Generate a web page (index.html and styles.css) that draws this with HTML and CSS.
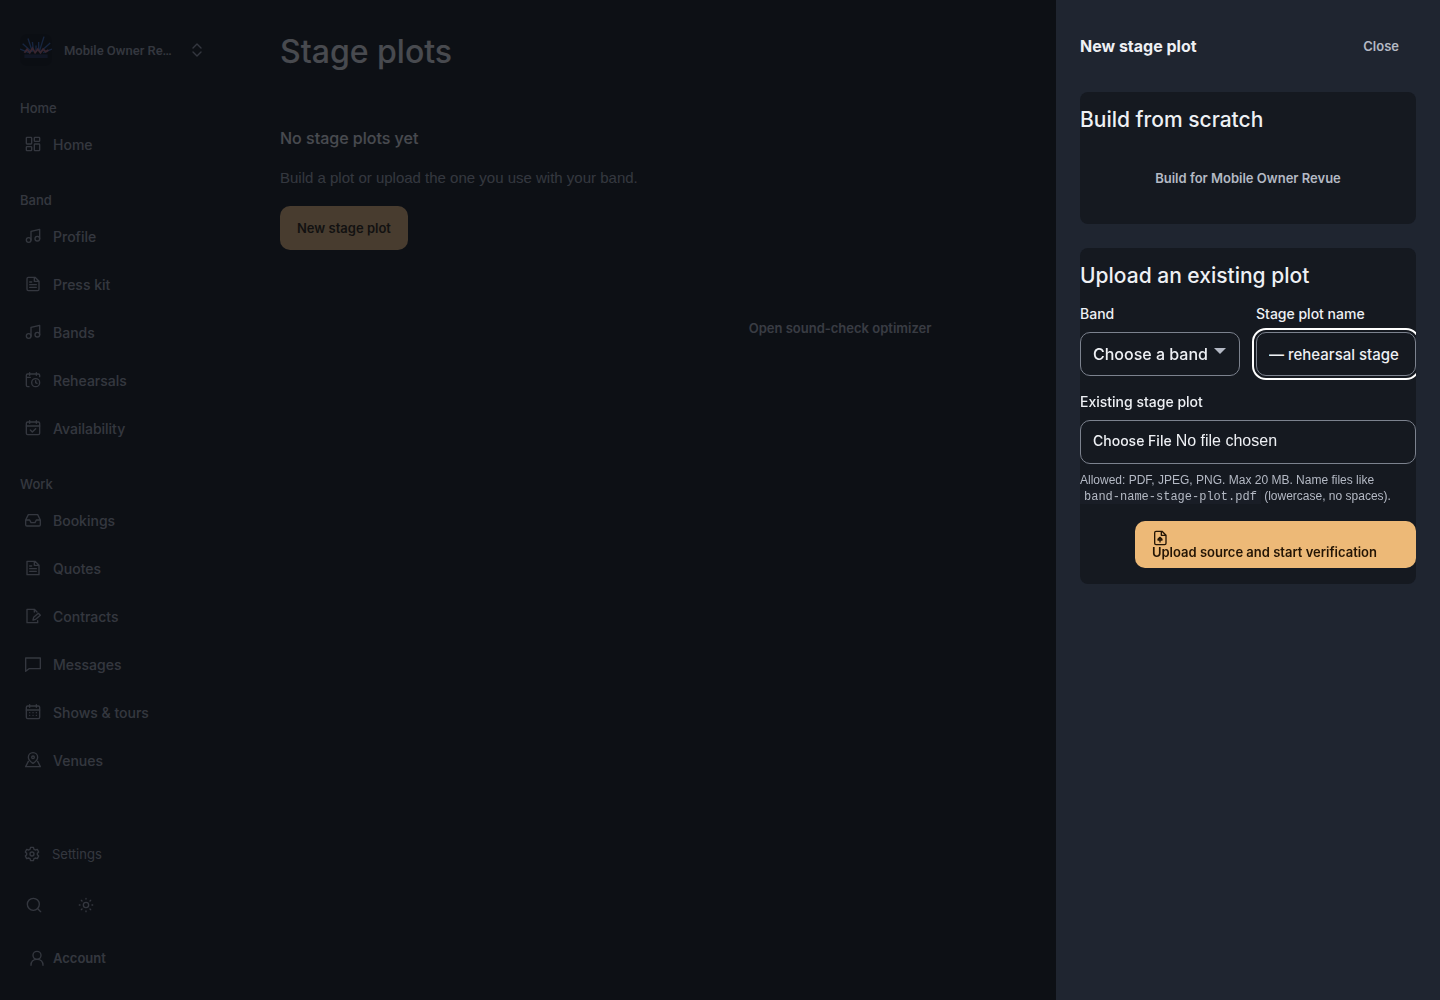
FILE: index.html
```html
<!DOCTYPE html>
<html lang="en">
<head>
    <meta charset="UTF-8">
    <meta name="viewport" content="width=device-width, initial-scale=1.0">
    <title>Stage plots</title>
    <link rel="stylesheet" href="styles.css">
</head>
<body>
    <div class="app">
        <aside class="sidebar">
            <button type="button" class="band-switch">
                <svg class="avatar" viewBox="0 0 36 36" fill="none" aria-hidden="true">
                    <rect width="36" height="36" rx="8" fill="#07090f"/>
                    <g stroke="#2f62b8" stroke-width="1.5">
                        <path d="M13 20 3 11M14 20 9 5M15 19 14 9M21 19 21 9M22 19 27 3M23 20 34 10M10 21 0 17M26 21 36 17M18 20V13"/>
                    </g>
                    <path d="M5 21l3-4 3 4 3-5 3 5 3-4 3 4 3-4 3 3 3-2" stroke="#b0647c" stroke-width="2"/>
                    <path d="M5 25h26" stroke="#1c2a50" stroke-width="4"/>
                </svg>
                <span class="band-name">Mobile Owner Revue</span>
                <svg class="icon" viewBox="0 0 24 24"><path d="m6 9 6-6 6 6M6 15l6 6 6-6"/></svg>
            </button>

            <nav class="nav">
                <section class="nav-group">
                    <h2>Home</h2>
                    <a href="#"><svg class="icon" viewBox="0 0 24 24"><rect x="2" y="2" width="8" height="10" rx="1"/><rect x="14" y="2" width="8" height="6" rx="1"/><rect x="14" y="12" width="8" height="10" rx="1"/><rect x="2" y="16" width="8" height="6" rx="1"/></svg>Home</a>
                </section>
                <section class="nav-group">
                    <h2>Band</h2>
                    <a href="#"><svg class="icon" viewBox="0 0 24 24"><path d="M9 18V5l13-3v14"/><circle cx="5.500" cy="18" r="3.500"/><circle cx="18.500" cy="16" r="3.500"/></svg>Profile</a>
                    <a href="#"><svg class="icon" viewBox="0 0 24 24"><path d="M15 2H5a2 2 0 0 0-2 2v16a2 2 0 0 0 2 2h14a2 2 0 0 0 2-2V8zM14 2v6h7M7 9h3M7 13h10M7 17h10"/></svg>Press kit</a>
                    <a href="#"><svg class="icon" viewBox="0 0 24 24"><path d="M9 18V5l13-3v14"/><circle cx="5.500" cy="18" r="3.500"/><circle cx="18.500" cy="16" r="3.500"/></svg>Bands</a>
                    <a href="#"><svg class="icon" viewBox="0 0 24 24"><path d="M7 1v4M17 1v4M22 7V5a2 2 0 0 0-2-2H4a2 2 0 0 0-2 2v15a2 2 0 0 0 2 2h2M2 8h6M16 13v3l2 1"/><circle cx="16" cy="16" r="6"/></svg>Rehearsals</a>
                    <a href="#"><svg class="icon" viewBox="0 0 24 24"><rect x="2" y="3" width="20" height="19" rx="2"/><path d="M7 1v4M17 1v4M2 9h20M8 15l3 3 5-5"/></svg>Availability</a>
                </section>
                <section class="nav-group">
                    <h2>Work</h2>
                    <a href="#"><svg class="icon" viewBox="0 0 24 24"><path d="M1 12h6l2 4h6l2-4h6M5 4 1 12v7a2 2 0 0 0 2 2h18a2 2 0 0 0 2-2v-7l-4-8z"/></svg>Bookings</a>
                    <a href="#"><svg class="icon" viewBox="0 0 24 24"><path d="M15 2H3v20h18V8zM14 2v6h7M7 9h3M7 13h10M7 17h10"/></svg>Quotes</a>
                    <a href="#"><svg class="icon" viewBox="0 0 24 24"><path d="M18 6l-4-4H3v20h16v-3M14 2v4M12 18l1-4 7-6 3 3-7 6z"/></svg>Contracts</a>
                    <a href="#"><svg class="icon" viewBox="0 0 24 24"><path d="M1 3h22v16H6l-5 4z"/></svg>Messages</a>
                    <a href="#"><svg class="icon" viewBox="0 0 24 24"><rect x="2" y="3" width="20" height="19" rx="2"/><path d="M7 1v4M17 1v4M2 9h20M7 13h.1M12 13h.1M17 13h.1M7 17h.1M12 17h.1M17 17h.1"/></svg>Shows &amp; tours</a>
                    <a href="#"><svg class="icon" viewBox="0 0 24 24"><path d="M12 17s-7-4-7-9a7 7 0 0 1 14 0c0 5-7 9-7 9z"/><circle cx="12" cy="8" r="2"/><path d="M5 14l-4 8h22l-4-8"/></svg>Venues</a>
                </section>
            </nav>

            <div class="sidebar-foot">
                <a href="#" class="settings"><svg class="icon" viewBox="0 0 24 24"><path d="M10 2h4l1 3 2 1 3-1 2 4-2 2v2l2 2-2 4-3-1-2 1-1 3h-4l-1-3-2-1-3 1-2-4 2-2v-2L2 9l2-4 3 1 2-1z"/><circle cx="12" cy="12" r="3"/></svg>Settings</a>
                <div class="tools">
                    <button type="button" aria-label="Search"><svg class="icon" viewBox="0 0 24 24"><circle cx="11" cy="11" r="9"/><path d="m18 18 4 4"/></svg></button>
                    <button type="button" aria-label="Theme"><svg class="icon" viewBox="0 0 24 24"><circle cx="12" cy="12" r="4"/><path d="M12 2v1M12 21v1M2 12h1M21 12h1M5 5l1 1M18 18l1 1M5 19l1-1M18 6l1-1"/></svg></button>
                </div>
                <button type="button" class="account"><svg class="icon" viewBox="0 0 24 24"><circle cx="12" cy="8" r="6"/><path d="M3 23c0-5 3-9 9-9s9 4 9 9"/></svg>Account</button>
            </div>
        </aside>

        <main class="main">
            <h1>Stage plots</h1>
            <section class="empty">
                <h2>No stage plots yet</h2>
                <p>Build a plot or upload the one you use with your band.</p>
                <button type="button" class="btn btn-primary">New stage plot</button>
            </section>
            <a href="#" class="btn optimizer">Open sound-check optimizer</a>
        </main>
    </div>

    <div class="backdrop"></div>

    <div class="drawer" role="dialog" aria-labelledby="drawer-title">
        <header class="drawer-head">
            <h2 id="drawer-title">New stage plot</h2>
            <button type="button" class="btn">Close</button>
        </header>

        <section class="card card-build">
            <h3>Build from scratch</h3>
            <button type="button" class="btn">Build for Mobile Owner Revue</button>
        </section>

        <form class="card card-upload">
            <h3>Upload an existing plot</h3>
            <div class="row">
                <div class="field">
                    <label for="band">Band</label>
                    <div class="select">
                        <select id="band" class="control">
                            <option>Choose a band</option>
                        </select>
                    </div>
                </div>
                <div class="field">
                    <label for="name">Stage plot name</label>
                    <input type="text" id="name" class="control" value="— rehearsal stage" autofocus>
                </div>
            </div>
            <div class="field">
                <label for="file">Existing stage plot</label>
                <input type="file" id="file" class="control">
                <p class="hint">Allowed: PDF, JPEG, PNG. Max 20 MB. Name files like <code>band-name-stage-plot.pdf</code> (lowercase, no spaces).</p>
            </div>
            <button type="submit" class="btn btn-primary btn-upload">
                <svg class="icon" viewBox="0 0 24 24"><path d="M15 2H6a2 2 0 0 0-2 2v16a2 2 0 0 0 2 2h13a2 2 0 0 0 2-2V8zM14 2v6h7M12 18v-6M9 14l3-3 3 3M9 15h6"/></svg>
                <span>Upload source and start verification</span>
            </button>
        </form>
    </div>
</body>
</html>
```
FILE: styles.css
```css
* {
    box-sizing: border-box;
}
body {
    margin: 0;
    font-family: "Liberation Sans", Arial, sans-serif;
    font-size: 16px;
    background: #0d1016;
    color: #eef0f4;
}
h1, h2, h3, p {
    margin: 0;
}
h1, h2, h3 {
    font-family: Inter, sans-serif;
    font-weight: 500;
}
a {
    color: inherit;
    text-decoration: none;
}
button {
    border: 0;
    background: none;
    color: inherit;
    cursor: pointer;
}
.icon {
    width: 16px;
    height: 16px;
    flex: none;
    fill: none;
    stroke: currentColor;
    stroke-width: 2;
    stroke-linecap: round;
    stroke-linejoin: round;
}

.app {
    display: flex;
    min-height: 100vh;
}
.sidebar {
    display: flex;
    flex-direction: column;
    width: 240px;
    padding: 28px 20px 20px;
    color: #a2a8b4;
}
.band-switch {
    display: flex;
    align-items: center;
    min-height: 44px;
    margin-bottom: 26px;
    padding: 0;
    font: 500 13px Roboto, sans-serif;
}
.avatar {
    width: 32px;
    height: 32px;
    margin-right: 12px;
}
.band-name {
    width: 112px;
    margin-right: 13px;
    overflow: hidden;
    text-align: left;
    text-overflow: ellipsis;
    white-space: nowrap;
}
.nav {
    display: grid;
    gap: 24px;
}
.nav-group {
    display: grid;
    gap: 4px;
}
.nav-group h2 {
    font-size: 13px;
    line-height: 20px;
}
.nav-group a,
.settings {
    display: flex;
    align-items: center;
    gap: 12px;
    height: 44px;
    padding-left: 5px;
    font: 500 14px Inter, sans-serif;
}
.sidebar-foot {
    display: grid;
    gap: 8px;
    margin-top: auto;
}
.settings {
    padding-left: 4px;
    font-size: 13px;
    font-weight: 400;
}
.tools {
    display: flex;
    gap: 8px;
    height: 44px;
}
.tools button {
    width: 44px;
    padding: 0;
}
.tools button:first-child {
    width: 28px;
    margin-right: 8px;
}
.account {
    display: flex;
    align-items: center;
    gap: 8px;
    height: 44px;
    padding: 0 9px;
    font: 600 13px Inter, sans-serif;
}

.main {
    flex: 1;
    display: flex;
    flex-direction: column;
    align-items: flex-start;
    padding: 32px 40px;
}
h1 {
    font-size: 32px;
    line-height: 40px;
}
.empty {
    margin-top: 56px;
}
.empty h2 {
    font-size: 16px;
    line-height: 20px;
}
.empty p {
    margin: 18px 0 16px;
    color: #a2a8b4;
    font-size: 15px;
    line-height: 24px;
}
.btn {
    height: 44px;
    padding: 0 17px;
    border-radius: 10px;
    color: #b4b9c4;
    font: 600 13px Inter, sans-serif;
}
.btn-primary {
    background: #edb977;
    color: #241505;
}
.optimizer {
    align-self: center;
    margin-top: 56px;
    line-height: 44px;
}

.backdrop {
    position: fixed;
    inset: 0;
    background: rgba(13, 16, 22, 0.74);
}
.drawer {
    position: fixed;
    top: 0;
    right: 0;
    bottom: 0;
    display: flex;
    flex-direction: column;
    gap: 24px;
    width: 384px;
    padding: 24px;
    overflow-y: auto;
    background: #1f2530;
}
.drawer-head {
    display: flex;
    align-items: center;
    justify-content: space-between;
}
.drawer-head h2 {
    font-size: 16px;
    font-weight: 700;
}
.card {
    display: grid;
    border-radius: 8px;
    background: #151920;
    overflow: hidden;
}
.card h3 {
    font-size: 21px;
    line-height: 24px;
}
.card-build {
    gap: 24px;
    padding: 16px 0 24px;
}
.card-upload {
    gap: 16px;
    padding: 16px 0;
}
.row {
    display: grid;
    grid-template-columns: 1fr 1fr;
    gap: 16px;
}
.field {
    display: grid;
    gap: 8px;
    min-width: 0;
}
.field label {
    font: 500 14px/20px Inter, sans-serif;
}
.control {
    width: 100%;
    height: 44px;
    padding: 0 12px;
    border: 1px solid #7c828e;
    border-radius: 10px;
    background: #151920;
    color: #eef0f4;
    font: 500 16px Inter, sans-serif;
    appearance: none;
}
.control:focus {
    outline: 2px solid #fff;
    outline-offset: 2px;
}
.select {
    position: relative;
}
.select::after {
    content: '';
    position: absolute;
    top: 16px;
    right: 14px;
    width: 12px;
    height: 6px;
    background: #b4b9c4;
    clip-path: polygon(0 0, 100% 0, 50% 100%);
    pointer-events: none;
}
input[type="text"] {
    font-size: 15px;
}
input[type="file"] {
    padding: 8px 12px;
    font: 400 16px/24px "Liberation Sans", Arial, sans-serif;
}
input[type="file"]::file-selector-button {
    margin: 0 4px 0 0;
    padding: 0;
    border: 0;
    background: none;
    color: inherit;
    font: 500 14px Inter, sans-serif;
}
.hint {
    padding-bottom: 1px;
    color: #b4b9c4;
    font-size: 12px;
    line-height: 16px;
}
.hint code {
    padding: 0 4px;
    background: #191d26;
    font: 12px "Liberation Mono", monospace;
}
.btn-upload {
    display: grid;
    justify-self: end;
    height: 47px;
    padding: 9px 39px 9px 17px;
    line-height: 13px;
}
```
